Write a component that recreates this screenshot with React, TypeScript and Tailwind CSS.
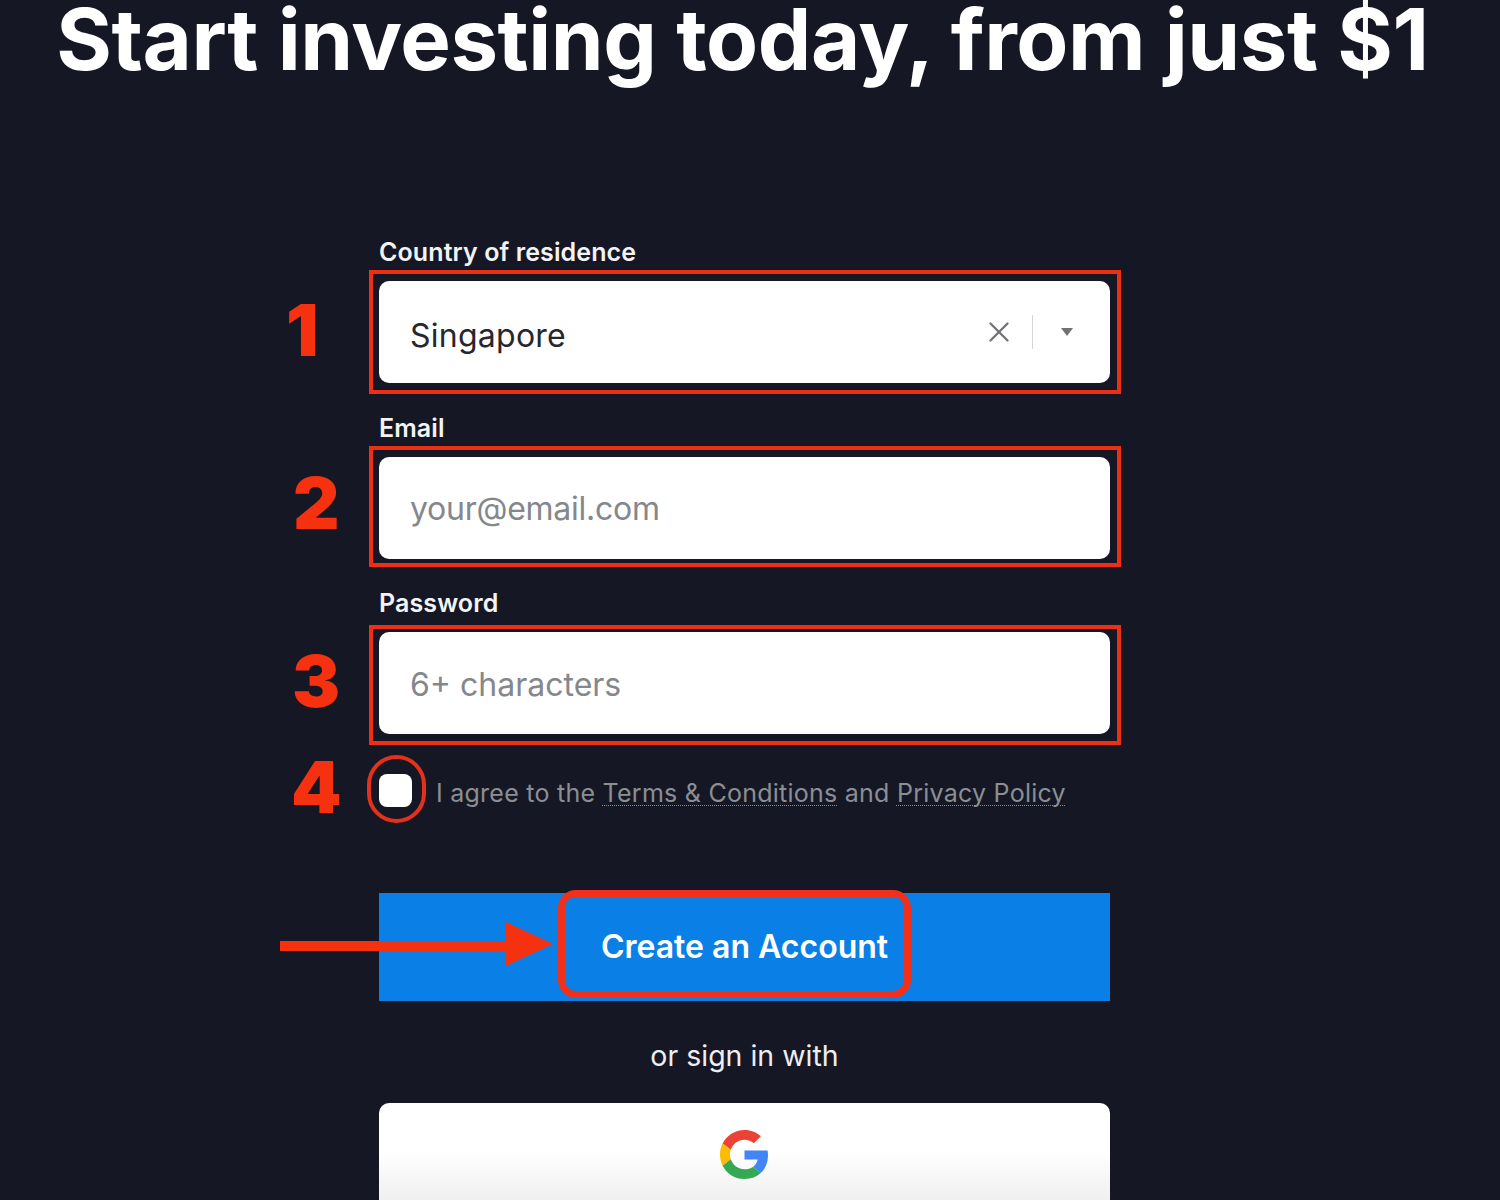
import React from 'react';
import { X } from 'lucide-react';

const FONT = 'font-["Inter","Liberation_Sans",sans-serif]';

const Field: React.FC<{
  label: string;
  number: string;
  numberClass: string;
  frameClass: string;
  className?: string;
  children: React.ReactNode;
}> = ({ label, number, numberClass, frameClass, className, children }) => (
  <div className={className}>
    <label className="block h-[43px] text-[25px] leading-[29px] font-semibold text-[#f2f3f5] tracking-[0.1px]">{label}</label>
    <div className="relative h-[102px] rounded-[10px] bg-white flex items-center pl-[31px] pr-[30px]">
      {children}
      {/* red annotation drawn over the screenshot */}
      <div className={`absolute border-[4px] border-[#ee2f14] pointer-events-none ${frameClass}`} />
      <span className={`absolute text-[72px] leading-none font-black text-[#f6310f] ${numberClass}`}>{number}</span>
    </div>
  </div>
);

const GoogleLogo = () => (
  <svg width="49" height="49" viewBox="0 0 48 48">
    <path fill="#EA4335" d="M24 9.5c3.5 0 6.7 1.2 9.2 3.6l6.9-6.9C35.9 2.4 30.5 0 24 0 14.6 0 6.5 5.4 2.6 13.2l8 6.2C12.5 13.7 17.800 9.500 24 9.500z" />
    <path fill="#4285F4" d="M47 24.500c0-1.600-.100-3.100-.400-4.500H24v9h12.900c-.600 3-2.200 5.500-4.700 7.200l7.700 6C44.400 38.100 47 31.900 47 24.500z" />
    <path fill="#FBBC05" d="M10.500 28.700c-.500-1.400-.800-3-.800-4.700s.300-3.200.800-4.700l-8-6.200C.900 16.300 0 20 0 24s.900 7.700 2.600 10.900l7.900-6.200z" />
    <path fill="#34A853" d="M24 48c6.500 0 11.900-2.100 15.900-5.800l-7.700-6c-2.200 1.500-4.900 2.300-8.200 2.300-6.200 0-11.500-4.200-13.400-9.800l-8 6.200C6.500 42.600 14.600 48 24 48z" />
  </svg>
);

export default function App() {
  return (
    <div className={`w-[1500px] h-[1200px] overflow-hidden bg-[#151824] flex flex-col ${FONT}`}>
      <h1 className="h-[238px] text-center text-[85px] leading-[80px] font-bold text-white tracking-[-0.45px] whitespace-nowrap -ml-[15px]">
        Start investing today, from just $1
      </h1>

      <form className="ml-[379px] w-[731px] flex flex-col">
        <Field
          label="Country of residence"
          number="1"
          numberClass="left-[-93px] top-[13px]"
          frameClass="-left-[10px] -right-[11px] -top-[11px] -bottom-[11px]"
        >
          <span className="relative top-[4px] flex-1 text-[32px] text-[#25272d] tracking-[0.25px]">Singapore</span>
          <X size={34} strokeWidth={1.7} className="text-[#737578]" />
          <span className="ml-[16px] w-[1px] h-[34px] bg-[#d5d6d8]" />
          <span className="ml-[28px] mr-[7px] w-0 h-0 border-x-[6px] border-x-transparent border-t-[8px] border-t-[#6f7174]" />
        </Field>

        <Field
          label="Email"
          number="2"
          numberClass="left-[-86px] top-[10px]"
          frameClass="-left-[10px] -right-[11px] -top-[11px] -bottom-[8px]"
          className="mt-[31px]"
        >
          <input
            readOnly
            placeholder="your@email.com"
            className="w-full pt-[2px] text-[32px] tracking-[-0.25px] outline-none bg-transparent placeholder:text-[#84878c]"
          />
        </Field>

        <Field
          label="Password"
          number="3"
          numberClass="left-[-87px] top-[13px]"
          frameClass="-left-[10px] -right-[11px] -top-[7px] -bottom-[11px]"
          className="mt-[30px]"
        >
          <input
            readOnly
            placeholder="6+ characters"
            className="w-full pt-[4px] text-[32px] outline-none bg-transparent placeholder:text-[#84878c]"
          />
        </Field>

        <div className="relative mt-[39px] flex items-center h-[34px]">
          <span className="w-[33px] h-[33px] rounded-[8px] bg-white shrink-0" />
          <p className="ml-[24px] mt-[5px] text-[25px] leading-[34px] text-[#8b8e95] tracking-[0.25px] whitespace-nowrap">
            I agree to the{' '}
            <a className="underline decoration-dotted decoration-1 underline-offset-[3px]">Terms &amp; Conditions</a> and{' '}
            <a className="underline decoration-dotted decoration-1 underline-offset-[3px]">Privacy Policy</a>
          </p>
          <div className="absolute left-[-12px] top-[-18px] w-[59px] h-[68px] rounded-full border-[4px] border-[#e5301a]" />
          <span className="absolute left-[-88px] top-[-22px] text-[72px] leading-none font-black text-[#f6310f]">4</span>
        </div>

        <div className="relative mt-[86px] h-[108px] bg-[#0a7fe6] flex items-center justify-center">
          <span className="text-[32px] font-semibold text-white">Create an Account</span>
          <div className="absolute left-[179px] top-[-3px] w-[353px] h-[108px] rounded-[18px] border-[7px] border-[#f0301a]" />
          {/* arrow annotation */}
          <svg className="absolute left-[-99px] top-[28px]" width="274" height="46" viewBox="0 0 274 46">
            <rect x="0" y="20" width="230" height="10" fill="#f6310f" />
            <path d="M226 1 L273 23 L226 45 Z" fill="#f6310f" />
          </svg>
        </div>

        <p className="mt-[38px] h-[34px] text-center text-[28.5px] leading-[34px] text-[#eceef1]">or sign in with</p>

        <button
          type="button"
          className="mt-[30px] h-[97px] rounded-t-[10px] bg-gradient-to-b from-white from-50% to-[#f0f0f0] flex justify-center pt-[27px]"
        >
          <GoogleLogo />
        </button>
      </form>
    </div>
  );
}
